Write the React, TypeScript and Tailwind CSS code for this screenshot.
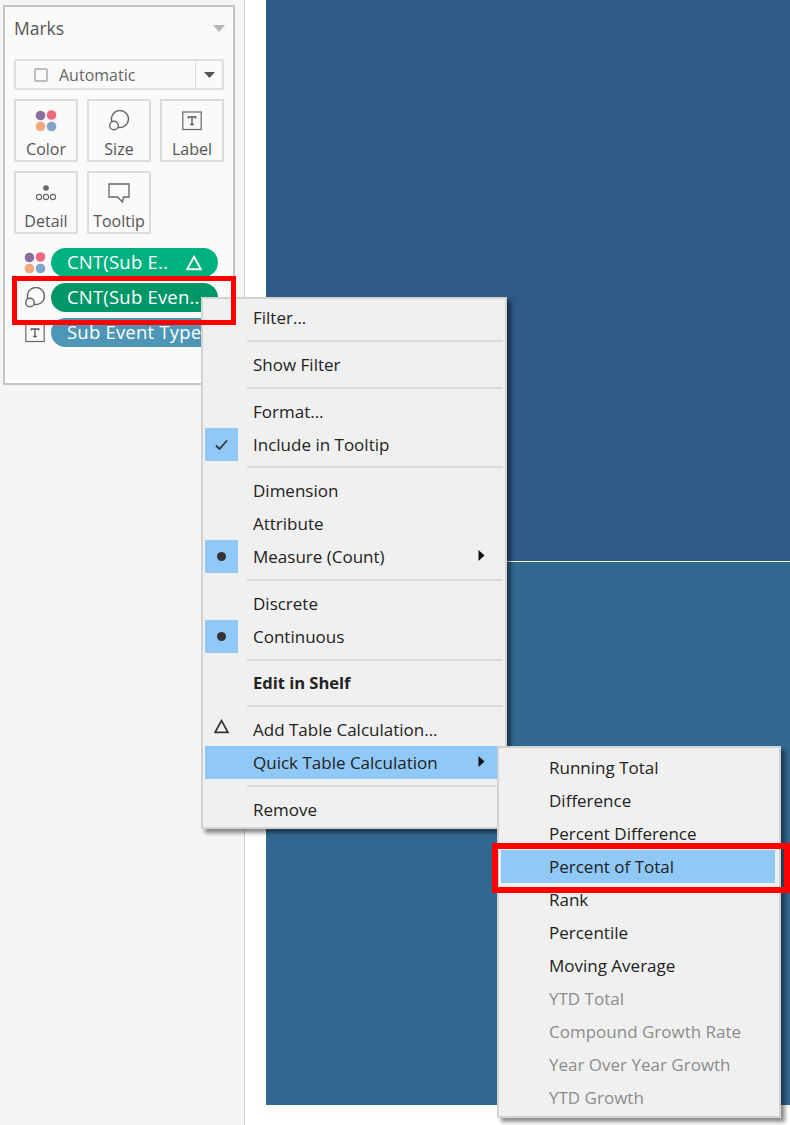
import React from "react";

const font = "font-['Open_Sans','Noto_Sans',sans-serif]";

function ColorIcon() {
  return (
    <svg width="22" height="22" viewBox="0 0 22 22">
      <circle cx="5.5" cy="5.5" r="4.8" fill="#8a6f9e" />
      <circle cx="16.5" cy="5" r="4.8" fill="#f0687f" />
      <circle cx="5.5" cy="16.5" r="4.8" fill="#f2a77c" />
      <circle cx="16.5" cy="16.5" r="4.8" fill="#7fa5cc" />
    </svg>
  );
}

function SizeIcon() {
  return (
    <svg width="22" height="22" viewBox="0 0 22 22" fill="none" stroke="#666" strokeWidth="1.4">
      <path d="M4 12A8.5 8.5 0 1 1 10 17.3" />
      <circle cx="6" cy="15.5" r="4.3" />
    </svg>
  );
}

function LabelIcon() {
  return (
    <svg width="20" height="20" viewBox="0 0 20 20" fill="none">
      <rect x="0.8" y="1" width="18.4" height="17.5" stroke="#666" strokeWidth="1.2" />
      <path d="M6.2 7.5V6H13.8V7.5M10 6V13.5M8.2 13.5H11.8" stroke="#555" strokeWidth="1.3" />
    </svg>
  );
}

function DetailIcon() {
  return (
    <svg width="22" height="18" viewBox="0 0 22 18" fill="none">
      <circle cx="11" cy="4" r="2.8" fill="#666" />
      <circle cx="4" cy="13" r="2.6" stroke="#666" strokeWidth="1.1" />
      <circle cx="11" cy="13" r="2.6" stroke="#666" strokeWidth="1.1" />
      <circle cx="18" cy="13" r="2.6" stroke="#666" strokeWidth="1.1" />
    </svg>
  );
}

function TooltipIcon() {
  return (
    <svg width="22" height="21" viewBox="0 0 22 21" fill="none">
      <path d="M1 1H21V14H15.5L14.5 19L9.5 14H1Z" stroke="#666" strokeWidth="1.3" />
    </svg>
  );
}

function Delta({ color, size }: { color: string; size: number }) {
  return (
    <svg width={size} height={size} viewBox="0 0 14 14" fill="none">
      <path d="M7 1.5L13 12.5H1Z" stroke={color} strokeWidth="1.6" />
    </svg>
  );
}

function MarkButton({ label, icon }: { label: string; icon: React.ReactNode }) {
  return (
    <div className="w-full h-[63px] border-2 border-[#dcdcdc] flex flex-col items-center">
      <div className="h-[36px] flex items-center justify-center mt-[2px]">{icon}</div>
      <span className="text-[16px] leading-[20px] text-[#555]">{label}</span>
    </div>
  );
}

function Pill({ icon, bg, text, delta }: { icon: React.ReactNode; bg: string; text: string; delta?: boolean }) {
  return (
    <div className="flex items-center h-[29px]">
      <div className="w-[37px] flex justify-center pl-[4px]">{icon}</div>
      <div className={`w-[167px] h-[29px] rounded-full flex items-center pl-[16px] pr-[16px] justify-between text-white text-[18.5px] tracking-[0.2px] whitespace-nowrap ${bg}`}>
        <span className="-mt-[2px]">{text}</span>
        {delta && <Delta color="#fff" size={16} />}
      </div>
    </div>
  );
}

function Row({ text, mark, bold, arrow, active }: { text: string; mark?: "check" | "dot"; bold?: boolean; arrow?: boolean; active?: boolean }) {
  return (
    <div className={`h-[33px] flex items-center relative ${active ? "bg-[#90c8f6]" : ""}`}>
      <div className={`w-[33px] h-[33px] flex items-center justify-center ${mark ? "bg-[#90c8f6]" : ""}`}>
        {mark === "check" && (
          <svg width="15" height="12" viewBox="0 0 14 12" fill="none">
            <path d="M1.5 6.5L5 10L12.5 1.5" stroke="#333" strokeWidth="1.8" />
          </svg>
        )}
        {mark === "dot" && <div className="w-[9px] h-[9px] rounded-full bg-[#333]" />}
      </div>
      <span className={`ml-[15px] text-[#222] whitespace-nowrap ${bold ? "font-bold text-[16.5px]" : "text-[17px]"}`}>{text}</span>
      {arrow && (
        <svg className="absolute left-[273px] top-[10px]" width="7" height="11" viewBox="0 0 7 11">
          <path d="M0.5 0L6.5 5.5L0.5 11Z" fill="#111" />
        </svg>
      )}
    </div>
  );
}

function Sep({ tight }: { tight?: boolean }) {
  return <div className={`h-[2px] ml-[42px] mr-[2px] bg-[#dcdcdc] ${tight ? "mt-[5px] mb-[6px]" : "my-[6px]"}`} />;
}

function SubRow({ text, active, off }: { text: string; active?: boolean; off?: boolean }) {
  return (
    <div className={`h-[33px] flex items-center pl-[48px] text-[17px] whitespace-nowrap ${active ? "bg-[#90c8f6]" : ""} ${off ? "text-[#8c8c8c]" : "text-[#222]"}`}>
      {text}
    </div>
  );
}

export default function App() {
  return (
    <div className={`relative flex w-[790px] h-[1125px] overflow-hidden bg-white ${font}`}>
      <aside className="w-[245px] shrink-0 bg-[#f5f5f5] border-r border-[#d0d0d0] pt-[5px] pl-[3px]">
        <div className="w-[232px] h-[380px] bg-[#fafafa] border-2 border-[#c4c4c4] px-[9px]">
          <div className="h-[42px] flex items-center justify-between">
            <span className="text-[17.5px] text-[#555]">Marks</span>
            <svg width="12" height="7" viewBox="0 0 12 7" className="-mr-[1px]">
              <path d="M0 0H12L6 7Z" fill="#b5b5b5" />
            </svg>
          </div>
          <div className="mt-[10px] h-[31px] border-2 border-[#dedede] rounded-[2px] flex items-center">
            <div className="flex-1 flex items-center pl-[18px]">
              <div className="w-[14px] h-[14px] border-2 border-[#bdbdbd] rounded-[2px]" />
              <span className="ml-[11px] text-[16px] text-[#666]">Automatic</span>
            </div>
            <div className="w-[27px] h-full border-l border-[#dedede] flex items-center justify-center">
              <svg width="11" height="6" viewBox="0 0 11 6">
                <path d="M0 0H11L5.5 6Z" fill="#555" />
              </svg>
            </div>
          </div>
          <div className="mt-[9px] grid grid-cols-[64px_64px_64px] gap-x-[9px] gap-y-[9px]">
            <MarkButton label="Color" icon={<ColorIcon />} />
            <MarkButton label="Size" icon={<SizeIcon />} />
            <MarkButton label="Label" icon={<LabelIcon />} />
            <MarkButton label="Detail" icon={<DetailIcon />} />
            <MarkButton label="Tooltip" icon={<TooltipIcon />} />
          </div>
          <div className="mt-[14px] flex flex-col gap-[6px]">
            <Pill icon={<ColorIcon />} bg="bg-[#00b180]" text="CNT(Sub E.." delta />
            <Pill icon={<SizeIcon />} bg="bg-[#009768]" text="CNT(Sub Even.." />
            <Pill icon={<LabelIcon />} bg="bg-[#4e96b5]" text="Sub Event Type" />
          </div>
        </div>
      </aside>

      <main className="flex-1 pl-[21px]">
        <div className="h-[1105px] flex flex-col">
          <div className="h-[561px] bg-[#2d5a87]" />
          <div className="h-[1px] bg-white" />
          <div className="flex-1 bg-[#316890]" />
        </div>
      </main>

      {/* context menu */}
      <div className="absolute left-[201px] top-[297px] w-[306px] h-[532px] bg-[#f0f0f0] border-2 border-[#d2d2d2] pl-[2px] pt-[2px] shadow-[4px_4px_4px_rgba(0,0,0,0.45)]">
        <Row text="Filter..." />
        <Sep />
        <Row text="Show Filter" />
        <Sep />
        <Row text="Format..." />
        <Row text="Include in Tooltip" mark="check" />
        <Sep tight />
        <Row text="Dimension" />
        <Row text="Attribute" />
        <Row text="Measure (Count)" mark="dot" arrow />
        <Sep />
        <Row text="Discrete" />
        <Row text="Continuous" mark="dot" />
        <Sep />
        <Row text="Edit in Shelf" bold />
        <Sep tight />
        <div className="relative">
          <Row text="Add Table Calculation..." />
          <div className="absolute left-[9px] top-[6px]">
            <Delta color="#333" size={15} />
          </div>
        </div>
        <Row text="Quick Table Calculation" arrow active />
        <Sep />
        <Row text="Remove" />
      </div>

      {/* submenu */}
      <div className="absolute left-[497px] top-[746px] w-[284px] h-[372px] bg-[#f0f0f0] border-2 border-[#d2d2d2] pl-[2px] pr-[4px] pt-[3px] shadow-[4px_4px_4px_rgba(0,0,0,0.45)]">
        <SubRow text="Running Total" />
        <SubRow text="Difference" />
        <SubRow text="Percent Difference" />
        <SubRow text="Percent of Total" active />
        <SubRow text="Rank" />
        <SubRow text="Percentile" />
        <SubRow text="Moving Average" />
        <SubRow text="YTD Total" off />
        <SubRow text="Compound Growth Rate" off />
        <SubRow text="Year Over Year Growth" off />
        <SubRow text="YTD Growth" off />
      </div>

      {/* red callouts */}
      <div className="absolute left-[12px] top-[276px] w-[224px] h-[49px] border-[5px] border-[#ff0000]" />
      <div className="absolute left-[492px] top-[843px] w-[298px] h-[50px] border-[6px] border-[#ff0000]" />
    </div>
  );
}
